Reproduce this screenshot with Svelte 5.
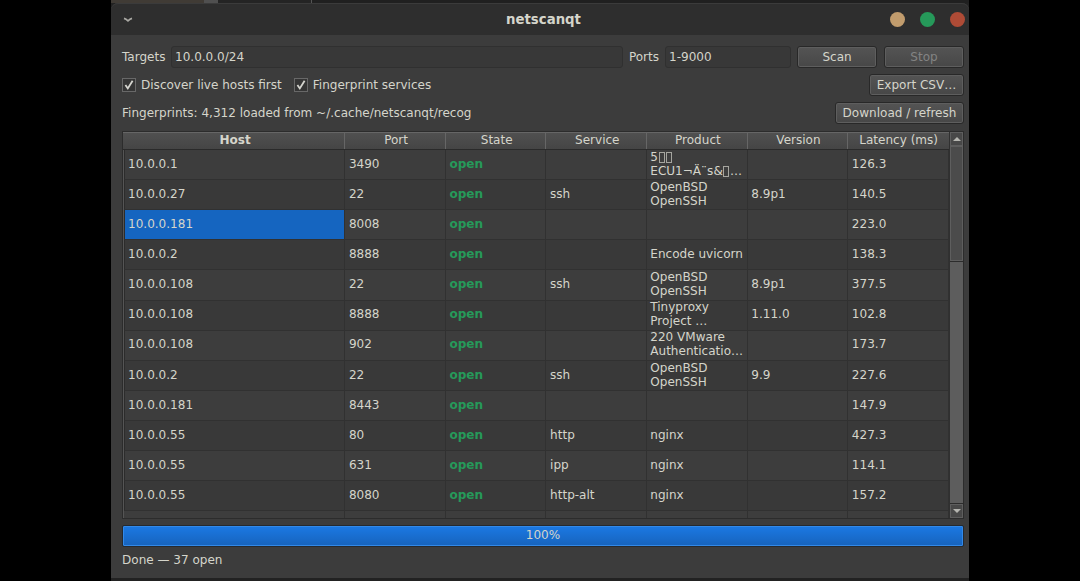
<script lang="ts">
  interface Row {
    host: string;
    port: number;
    service?: string;
    product?: string[];
    version?: string;
    latency: string;
  }

  // Unprintable bytes in a banner are stored as this character
  const UNPRINTABLE = '\uFFFD';

  const columns = ['Host', 'Port', 'State', 'Service', 'Product', 'Version', 'Latency (ms)'];

  const rows: Row[] = [
    { host: '10.0.0.1', port: 3490, product: ['5\uFFFD\uFFFD', 'ECU1¬Ä¨s&\uFFFD…'], latency: '126.3' },
    { host: '10.0.0.27', port: 22, service: 'ssh', product: ['OpenBSD', 'OpenSSH'], version: '8.9p1', latency: '140.5' },
    { host: '10.0.0.181', port: 8008, latency: '223.0' },
    { host: '10.0.0.2', port: 8888, product: ['Encode uvicorn'], latency: '138.3' },
    { host: '10.0.0.108', port: 22, service: 'ssh', product: ['OpenBSD', 'OpenSSH'], version: '8.9p1', latency: '377.5' },
    { host: '10.0.0.108', port: 8888, product: ['Tinyproxy', 'Project …'], version: '1.11.0', latency: '102.8' },
    { host: '10.0.0.108', port: 902, product: ['220 VMware', 'Authenticatio…'], latency: '173.7' },
    { host: '10.0.0.2', port: 22, service: 'ssh', product: ['OpenBSD', 'OpenSSH'], version: '9.9', latency: '227.6' },
    { host: '10.0.0.181', port: 8443, latency: '147.9' },
    { host: '10.0.0.55', port: 80, service: 'http', product: ['nginx'], latency: '427.3' },
    { host: '10.0.0.55', port: 631, service: 'ipp', product: ['nginx'], latency: '114.1' },
    { host: '10.0.0.55', port: 8080, service: 'http-alt', product: ['nginx'], latency: '157.2' }
  ];

  let targets = $state('10.0.0.0/24');
  let ports = $state('1-9000');
  let discover = $state(true);
  let fingerprint = $state(true);
  let selected = $state(2);
</script>

{#snippet checkbox(checked: boolean, label: string, toggle: () => void)}
  <button class="check" role="checkbox" aria-checked={checked} onclick={toggle}>
    <span class="check-box">
      {#if checked}
        <svg width="12" height="12" viewBox="0 0 12 12">
          <path d="M2.4 6 L4.8 9.4 L9.6 1.8" fill="none" stroke="#d5d5cf" stroke-width="1.8" />
        </svg>
      {/if}
    </span>
    {label}
  </button>
{/snippet}

<div class="desktop">
  <div class="backdrop"><span class="tab"></span><span class="rest"></span></div>
  <div class="window">
    <header class="titlebar">
      <svg class="menu" width="10" height="6" viewBox="0 0 10 6">
        <path d="M1 1.4 Q3 2 5 3.8 Q7 2 9 1.4" fill="none" stroke="#aaa9a4" stroke-width="1.7" />
      </svg>
      <h1>netscanqt</h1>
      <div class="controls">
        <span class="dot minimize"></span>
        <span class="dot maximize"></span>
        <span class="dot close"></span>
      </div>
    </header>

    <main>
      <div class="bar">
        <label for="targets">Targets</label>
        <input id="targets" class="targets" bind:value={targets} />
        <label class="ports-label" for="ports">Ports</label>
        <input id="ports" class="ports" bind:value={ports} />
        <button class="btn wide">Scan</button>
        <button class="btn wide stop" disabled>Stop</button>
      </div>

      <div class="bar">
        {@render checkbox(discover, 'Discover live hosts first', () => (discover = !discover))}
        {@render checkbox(fingerprint, 'Fingerprint services', () => (fingerprint = !fingerprint))}
        <button class="btn export">Export CSV…</button>
      </div>

      <div class="bar">
        <span>Fingerprints: 4,312 loaded from ~/.cache/netscanqt/recog</span>
        <button class="btn download">Download / refresh</button>
      </div>

      <div class="results">
        <div class="view">
          <div class="grid head">
            {#each columns as column, i}
              <div class="th" class:sorted={i === 0}>{column}</div>
            {/each}
          </div>
          <div class="body">
            {#each rows as row, i}
              <div class="grid row" class:alt={i % 2 === 1}>
                <!-- svelte-ignore a11y_click_events_have_key_events, a11y_no_static_element_interactions -->
                <div class="td host" class:selected={selected === i} onclick={() => (selected = i)}>{row.host}</div>
                <div class="td">{row.port}</div>
                <div class="td open">open</div>
                <div class="td">{row.service ?? ''}</div>
                <div class="td product">
                  {#each row.product ?? [] as line}
                    <div>{#each [...line] as ch}{#if ch === UNPRINTABLE}<span class="box"></span>{:else}{ch}{/if}{/each}</div>
                  {/each}
                </div>
                <div class="td">{row.version ?? ''}</div>
                <div class="td">{row.latency}</div>
              </div>
            {/each}
            <div class="grid row">
              {#each columns as _}
                <div class="td"></div>
              {/each}
            </div>
          </div>
        </div>
        <div class="scrollbar">
          <div class="arrow">
            <svg width="8" height="4" viewBox="0 0 8 4"><path d="M0 4 L4 0 L8 4 Z" fill="#b5b5b0" /></svg>
          </div>
          <div class="thumb"></div>
          <div class="track"></div>
          <div class="arrow">
            <svg width="8" height="4" viewBox="0 0 8 4"><path d="M0 0 L4 4 L8 0 Z" fill="#b5b5b0" /></svg>
          </div>
        </div>
      </div>

      <div class="progress">100%</div>
      <div class="status">Done — 37 open</div>
    </main>
  </div>
</div>

<style>
  :global(body) {
    background: #000;
  }

  .desktop {
    box-sizing: border-box;
    width: 858px;
    height: 581px;
    margin-left: 111px;
    background: #222;
    font-family: 'DejaVu Sans', sans-serif;
    font-size: 12.04px;
    color: #d5d5cb;
    overflow: hidden;
  }

  .desktop * {
    box-sizing: border-box;
  }

  .backdrop {
    display: flex;
    height: 3px;
    background: #403b35;
  }

  .tab {
    width: 14px;
    margin-left: 93px;
    background: #505050;
  }

  .rest {
    flex: 1;
    background: linear-gradient(90deg, #242424 93px, #555 93px, #555 94px, #202020 94px);
  }

  .window {
    display: flex;
    flex-direction: column;
    height: 575px;
    background: #3c3c3c;
    border-radius: 7px 7px 0 0;
  }

  .titlebar {
    display: flex;
    align-items: center;
    height: 32px;
    padding: 0 4px 0 12px;
    background: #2e2e2e;
    border-top: 1px solid #3b3b3b;
    border-radius: 7px 7px 0 0;
  }

  .menu {
    flex: none;
    margin-right: 64px;
  }

  h1 {
    flex: 1;
    margin: 0;
    font-size: 13.3px;
    font-weight: bold;
    text-align: center;
  }

  .controls {
    display: flex;
    gap: 15px;
  }

  .dot {
    width: 15px;
    height: 15px;
    border-radius: 50%;
  }

  .minimize {
    background: #c19c6d;
  }

  .maximize {
    background: #26995a;
  }

  .close {
    background: #ae4b36;
  }

  main {
    flex: 1;
    padding: 11px 5px 0 11px;
  }

  .bar {
    display: flex;
    align-items: center;
    height: 22px;
    margin-bottom: 6px;
  }

  input {
    height: 22px;
    padding: 0 3px;
    font: inherit;
    color: inherit;
    background: #383838;
    border: 1px solid #303030;
    border-radius: 3px;
    outline: none;
  }

  .targets {
    flex: 1;
    min-width: 0;
    margin-left: 5.5px;
  }

  .ports-label {
    margin-left: 6px;
  }

  .ports {
    width: 126px;
    margin: 0 6px 0 6px;
  }

  .btn {
    height: 22px;
    padding: 0;
    font: inherit;
    color: inherit;
    background: linear-gradient(#545454, #474747);
    border: 1px solid #282828;
    border-radius: 3px;
    box-shadow: inset 0 0 0 1px #5e5e5e;
  }

  .wide {
    width: 80px;
  }

  .stop {
    margin-left: 7px;
    color: #838383;
  }

  .export {
    width: 95px;
    margin-left: auto;
  }

  .download {
    width: 129px;
    margin-left: auto;
  }

  .check {
    display: flex;
    align-items: center;
    gap: 5px;
    margin-right: 12px;
    padding: 0;
    font: inherit;
    color: inherit;
    background: none;
    border: none;
  }

  .check-box {
    display: flex;
    width: 14px;
    height: 14px;
    background: #353535;
    border: 1px solid #686868;
  }

  .results {
    display: flex;
    height: 388px;
    margin-top: 7px;
    border: 1px solid #2c2c2c;
  }

  .view {
    display: flex;
    flex: 1;
    flex-direction: column;
    border-right: 1px solid #303030;
    overflow: hidden;
  }

  .grid {
    display: grid;
    grid-template-columns: 222.3px 100.6px 100.6px 100.6px 100.6px 100.6px 1fr;
  }

  .head {
    flex: none;
    height: 18px;
    background: linear-gradient(#505050, #454545);
    border-top: 1px solid #666;
    border-bottom: 1px solid #2a2a2a;
  }

  .th {
    padding-left: 2px;
    line-height: 15px;
    text-align: center;
    border-right: 1px solid #666;
  }

  .th:last-child {
    padding-left: 0;
    border-right: none;
  }

  .sorted {
    padding-left: 3px;
    font-weight: bold;
  }

  .body {
    flex: 1;
    min-height: 0;
    border-left: 1px solid #555;
    overflow: hidden;
  }

  .body .grid {
    grid-template-columns: 221.3px 100.6px 100.6px 100.6px 100.6px 100.6px 1fr;
  }

  .row {
    height: 30.12px;
    background: #3d3d3d;
  }

  .alt {
    background: #393939;
  }

  .td {
    display: flex;
    align-items: center;
    min-width: 0;
    padding: 0 0 1.6px 3.6px;
    border-right: 1px solid #313131;
    border-bottom: 1px solid #313131;
    white-space: nowrap;
    overflow: hidden;
  }

  .host {
    padding-left: 3px;
    border-left: 1px solid #2c2c2c;
  }

  .selected {
    background: #1565c0;
  }

  .open {
    font-weight: bold;
    color: #26995a;
  }

  .product {
    flex-direction: column;
    align-items: flex-start;
    justify-content: center;
    padding-left: 3.2px;
    line-height: 14px;
  }

  .box {
    display: inline-block;
    width: 6px;
    height: 11px;
    margin: 0 0.6px;
    border: 1px solid #a5a59f;
    vertical-align: -2px;
  }

  .scrollbar {
    display: flex;
    flex-direction: column;
    width: 13px;
    background: #2c2c2c;
  }

  .arrow {
    display: flex;
    flex: none;
    align-items: center;
    justify-content: center;
    height: 14px;
    background: #484848;
    border: 1px solid #5e5e5e;
  }

  .thumb {
    flex: none;
    height: 115px;
    background: #4b4b4b;
    border: 1px solid #5e5e5e;
  }

  .track {
    flex: 1;
    margin: 1px 0;
    background: #5d5d5d;
  }

  .progress {
    height: 22px;
    margin-top: 6px;
    line-height: 19px;
    text-align: center;
    background: linear-gradient(#1b79e4, #1763bc);
    border: 1px solid #252a30;
    border-radius: 2px;
    box-shadow: inset 0 0 0 1px #3289e8;
  }

  .status {
    margin-top: 5px;
    line-height: 16px;
  }
</style>
